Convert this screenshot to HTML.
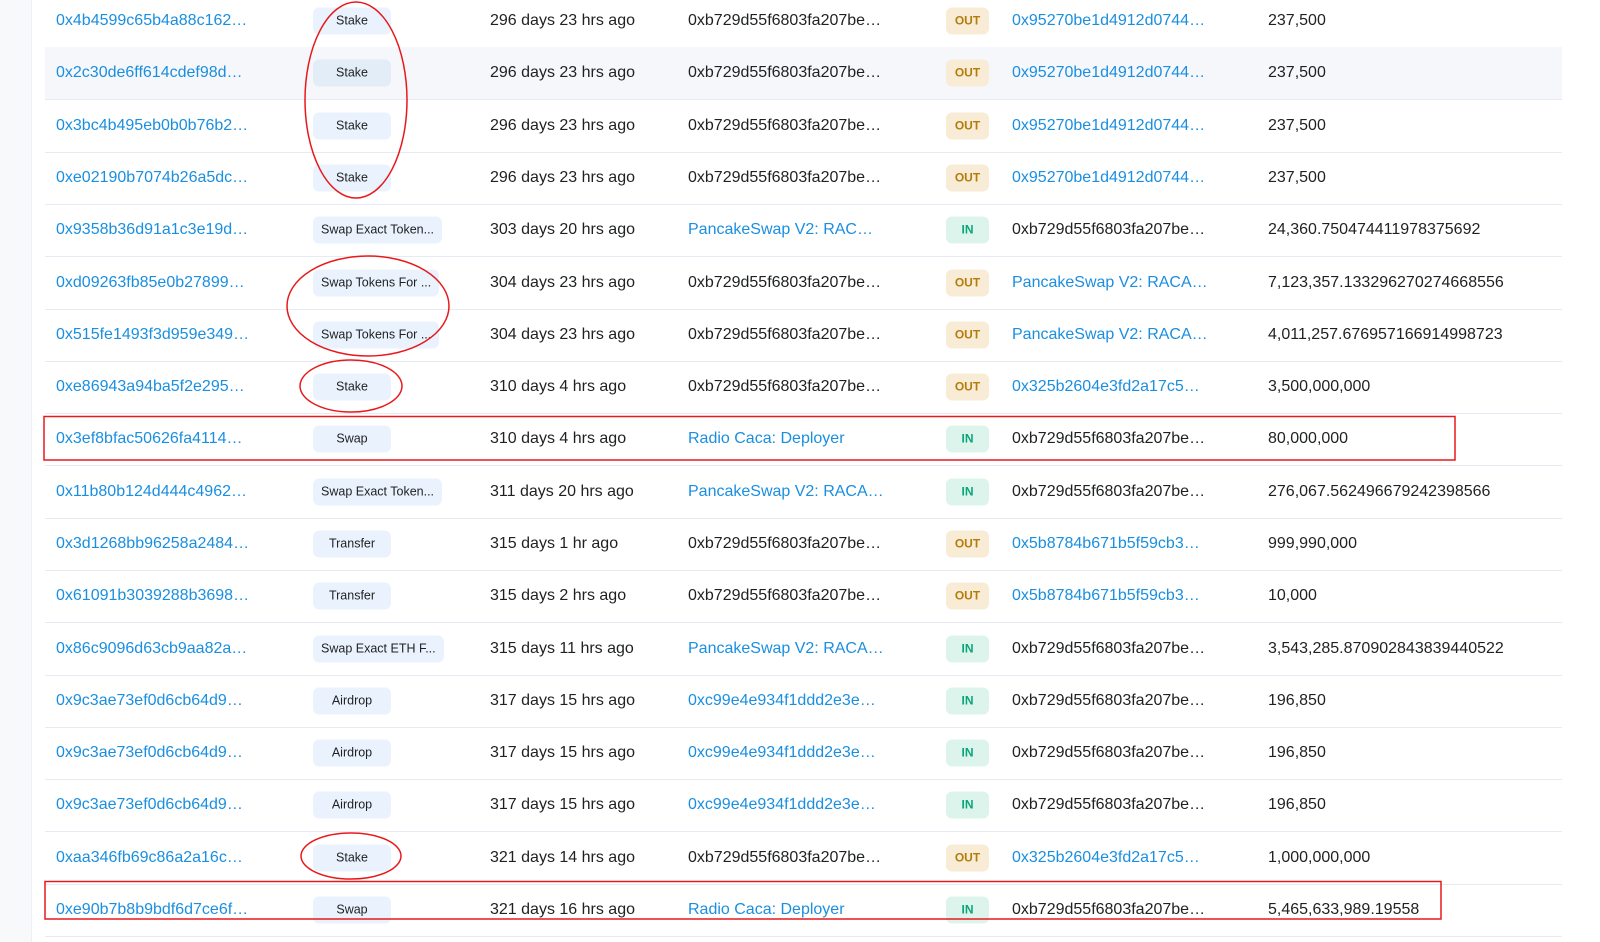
<!DOCTYPE html>
<html><head><meta charset="utf-8"><style>
body{margin:0;width:1600px;height:942px;overflow:hidden;background:#fff;font-family:"Liberation Sans",Arial,sans-serif;font-size:16px;color:#1e2022;position:relative}
.strip{position:absolute;left:0;top:0;width:31px;height:942px;background:#f8f9fb;border-right:1px solid #eef0f4}
.row{position:absolute;left:45px;width:1517px;height:52px;border-bottom:1px solid #e7eaf3}
.row.h{background:#f6f7fa}
.row span{position:absolute;top:50%;transform:translateY(-50%);white-space:nowrap}
.c1{left:11px}.c3{left:445px}.c4{left:643px}.c6{left:967px}.c7{left:1223px}
.l{color:#1a8fe0}
.m{left:268px;height:27px;line-height:27px;background:#eaf3fd;border-radius:6px;font-size:12.5px;text-align:center;min-width:78px;padding:0 8px;box-sizing:border-box}
.h .m{background:#e3edf8}
.d{left:901px;width:43px;height:27px;line-height:27px;border-radius:6px;font-size:12px;font-weight:bold;text-align:center}
.o{background:#f9ecd6;color:#b47d0a}.i{background:#ddf4ec;color:#0aa57a}
svg{position:absolute;left:0;top:0}
</style></head><body>
<div class="strip"></div>
<div class="row" style="top:-5px"><span class="c1 l">0x4b4599c65b4a88c162…</span><span class="m">Stake</span><span class="c3">296 days 23 hrs ago</span><span class="c4">0xb729d55f6803fa207be…</span><span class="d o">OUT</span><span class="c6 l">0x95270be1d4912d0744…</span><span class="c7">237,500</span></div>
<div class="row h" style="top:47px"><span class="c1 l">0x2c30de6ff614cdef98d…</span><span class="m">Stake</span><span class="c3">296 days 23 hrs ago</span><span class="c4">0xb729d55f6803fa207be…</span><span class="d o">OUT</span><span class="c6 l">0x95270be1d4912d0744…</span><span class="c7">237,500</span></div>
<div class="row" style="top:100px"><span class="c1 l">0x3bc4b495eb0b0b76b2…</span><span class="m">Stake</span><span class="c3">296 days 23 hrs ago</span><span class="c4">0xb729d55f6803fa207be…</span><span class="d o">OUT</span><span class="c6 l">0x95270be1d4912d0744…</span><span class="c7">237,500</span></div>
<div class="row" style="top:152px"><span class="c1 l">0xe02190b7074b26a5dc…</span><span class="m">Stake</span><span class="c3">296 days 23 hrs ago</span><span class="c4">0xb729d55f6803fa207be…</span><span class="d o">OUT</span><span class="c6 l">0x95270be1d4912d0744…</span><span class="c7">237,500</span></div>
<div class="row" style="top:204px"><span class="c1 l">0x9358b36d91a1c3e19d…</span><span class="m">Swap Exact Token...</span><span class="c3">303 days 20 hrs ago</span><span class="c4 l">PancakeSwap V2: RAC…</span><span class="d i">IN</span><span class="c6">0xb729d55f6803fa207be…</span><span class="c7">24,360.750474411978375692</span></div>
<div class="row" style="top:257px"><span class="c1 l">0xd09263fb85e0b27899…</span><span class="m">Swap Tokens For ...</span><span class="c3">304 days 23 hrs ago</span><span class="c4">0xb729d55f6803fa207be…</span><span class="d o">OUT</span><span class="c6 l">PancakeSwap V2: RACA…</span><span class="c7">7,123,357.133296270274668556</span></div>
<div class="row" style="top:309px"><span class="c1 l">0x515fe1493f3d959e349…</span><span class="m">Swap Tokens For ...</span><span class="c3">304 days 23 hrs ago</span><span class="c4">0xb729d55f6803fa207be…</span><span class="d o">OUT</span><span class="c6 l">PancakeSwap V2: RACA…</span><span class="c7">4,011,257.676957166914998723</span></div>
<div class="row" style="top:361px"><span class="c1 l">0xe86943a94ba5f2e295…</span><span class="m">Stake</span><span class="c3">310 days 4 hrs ago</span><span class="c4">0xb729d55f6803fa207be…</span><span class="d o">OUT</span><span class="c6 l">0x325b2604e3fd2a17c5…</span><span class="c7">3,500,000,000</span></div>
<div class="row" style="top:413px"><span class="c1 l">0x3ef8bfac50626fa4114…</span><span class="m">Swap</span><span class="c3">310 days 4 hrs ago</span><span class="c4 l">Radio Caca: Deployer</span><span class="d i">IN</span><span class="c6">0xb729d55f6803fa207be…</span><span class="c7">80,000,000</span></div>
<div class="row" style="top:466px"><span class="c1 l">0x11b80b124d444c4962…</span><span class="m">Swap Exact Token...</span><span class="c3">311 days 20 hrs ago</span><span class="c4 l">PancakeSwap V2: RACA…</span><span class="d i">IN</span><span class="c6">0xb729d55f6803fa207be…</span><span class="c7">276,067.562496679242398566</span></div>
<div class="row" style="top:518px"><span class="c1 l">0x3d1268bb96258a2484…</span><span class="m">Transfer</span><span class="c3">315 days 1 hr ago</span><span class="c4">0xb729d55f6803fa207be…</span><span class="d o">OUT</span><span class="c6 l">0x5b8784b671b5f59cb3…</span><span class="c7">999,990,000</span></div>
<div class="row" style="top:570px"><span class="c1 l">0x61091b3039288b3698…</span><span class="m">Transfer</span><span class="c3">315 days 2 hrs ago</span><span class="c4">0xb729d55f6803fa207be…</span><span class="d o">OUT</span><span class="c6 l">0x5b8784b671b5f59cb3…</span><span class="c7">10,000</span></div>
<div class="row" style="top:623px"><span class="c1 l">0x86c9096d63cb9aa82a…</span><span class="m">Swap Exact ETH F...</span><span class="c3">315 days 11 hrs ago</span><span class="c4 l">PancakeSwap V2: RACA…</span><span class="d i">IN</span><span class="c6">0xb729d55f6803fa207be…</span><span class="c7">3,543,285.870902843839440522</span></div>
<div class="row" style="top:675px"><span class="c1 l">0x9c3ae73ef0d6cb64d9…</span><span class="m">Airdrop</span><span class="c3">317 days 15 hrs ago</span><span class="c4 l">0xc99e4e934f1ddd2e3e…</span><span class="d i">IN</span><span class="c6">0xb729d55f6803fa207be…</span><span class="c7">196,850</span></div>
<div class="row" style="top:727px"><span class="c1 l">0x9c3ae73ef0d6cb64d9…</span><span class="m">Airdrop</span><span class="c3">317 days 15 hrs ago</span><span class="c4 l">0xc99e4e934f1ddd2e3e…</span><span class="d i">IN</span><span class="c6">0xb729d55f6803fa207be…</span><span class="c7">196,850</span></div>
<div class="row" style="top:779px"><span class="c1 l">0x9c3ae73ef0d6cb64d9…</span><span class="m">Airdrop</span><span class="c3">317 days 15 hrs ago</span><span class="c4 l">0xc99e4e934f1ddd2e3e…</span><span class="d i">IN</span><span class="c6">0xb729d55f6803fa207be…</span><span class="c7">196,850</span></div>
<div class="row" style="top:832px"><span class="c1 l">0xaa346fb69c86a2a16c…</span><span class="m">Stake</span><span class="c3">321 days 14 hrs ago</span><span class="c4">0xb729d55f6803fa207be…</span><span class="d o">OUT</span><span class="c6 l">0x325b2604e3fd2a17c5…</span><span class="c7">1,000,000,000</span></div>
<div class="row" style="top:884px"><span class="c1 l">0xe90b7b8b9bdf6d7ce6f…</span><span class="m">Swap</span><span class="c3">321 days 16 hrs ago</span><span class="c4 l">Radio Caca: Deployer</span><span class="d i">IN</span><span class="c6">0xb729d55f6803fa207be…</span><span class="c7">5,465,633,989.19558</span></div>
<svg width="1600" height="942" fill="none" stroke="#e8191b" stroke-width="1.5">
<ellipse cx="356" cy="100" rx="51" ry="98"/>
<ellipse cx="368" cy="306" rx="81" ry="50"/>
<ellipse cx="351" cy="386" rx="51" ry="26"/>
<ellipse cx="351" cy="856" rx="50" ry="23"/>
<rect x="44" y="416.5" width="1411" height="43.5"/>
<rect x="45" y="881.5" width="1396" height="37.5"/>
</svg>
</body></html>
